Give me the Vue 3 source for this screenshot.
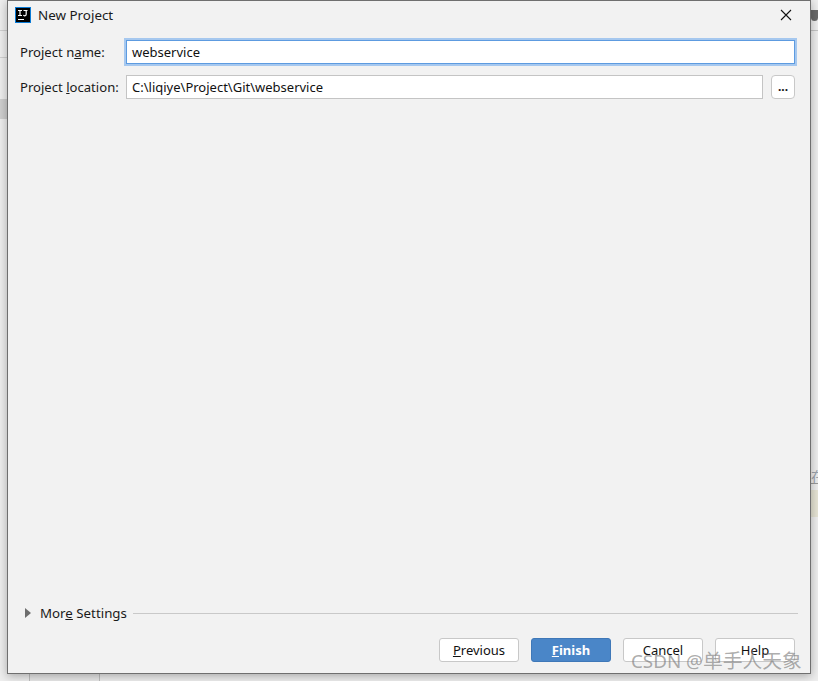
<script setup>
const ok = true
</script>

<template>
  <div class="desk">
    <div class="ruleLeft a"></div>
    <div class="ruleLeft b"></div>
    <div class="bandLeft"></div>
    <div class="bottomTab"></div>
    <div class="rightIcon"></div>
    <div class="rightLine one"></div>
    <div class="rightGlyph">在</div>
    <div class="rightLine two"></div>
    <div class="rightNote"></div>
    <section class="dialog">
      <header class="title">
        <svg class="logo" width="16" height="16" viewBox="0 0 16 16">
          <rect x="0" y="0" width="16" height="16" fill="#0a7bd6" />
          <rect x="1" y="1" width="14" height="14" fill="#000" />
          <rect x="3" y="12" width="6" height="1" fill="#fff" />
          <path d="M3 3.5h4M5 3.5v5M3 8.5h4M8.5 3.5h4M11.2 3.5v3.6a1.5 1.5 0 0 1-2.8.9" fill="none" stroke="#fff" stroke-width="1.2" />
        </svg>
        <span class="titleText">New Project</span>
        <svg class="close" width="12" height="12" viewBox="0 0 12 12">
          <path d="M1 1l10 10M11 1L1 11" stroke="#111" stroke-width="1.1" fill="none" />
        </svg>
      </header>

      <div class="form">
        <div class="row">
          <label class="label">Project n<u>a</u>me:</label>
          <div class="input focus">webservice</div>
        </div>
        <div class="row">
          <label class="label">Project <u>l</u>ocation:</label>
          <div class="input">C:\liqiye\Project\Git\webservice</div>
          <button class="dots">...</button>
        </div>
      </div>

      <div class="more">
        <svg class="tri" width="6" height="10" viewBox="0 0 6 10"><path d="M0 0l6 5-6 5z" fill="#6e6e6e" /></svg>
        <span class="moreText">Mor<u>e</u> Settings</span>
        <span class="moreLine"></span>
      </div>

      <footer class="foot">
        <button class="btn"><u>P</u>revious</button>
        <button class="btn primary"><u>F</u>inish</button>
        <button class="btn">Cancel</button>
        <button class="btn">Help</button>
      </footer>
    </section>
    <div class="mark"><span class="latin">CSDN @</span>单手人天象</div>
  </div>
</template>

<style>
html, body { margin: 0; padding: 0; background: #e9e9e9; overflow: hidden; }
</style>

<style scoped>
.desk { position: relative; width: 818px; height: 681px; background: #eeeeee; overflow: hidden; font-family: "Noto Sans", "Open Sans", sans-serif; }
.ruleLeft { position: absolute; left: 0; width: 7px; height: 1px; background: #d0d0d0; }
.ruleLeft.a { top: 30px; }
.ruleLeft.b { top: 57px; }
.bandLeft { position: absolute; left: 0; top: 99px; width: 7px; height: 20px; background: #cfcfcf; }
.bottomTab { position: absolute; left: 29px; top: 673px; width: 71px; height: 8px; border-left: 1px solid #c0c0c0; border-right: 1px solid #c0c0c0; box-sizing: border-box; background: #e8e8e8; }
.rightIcon { position: absolute; left: 811px; top: 10px; width: 7px; height: 11px; background: #6a6a6a; border-radius: 0 0 4px 4px; }
.rightLine { position: absolute; left: 811px; width: 7px; height: 1px; background: #c4c4c4; }
.rightLine.one { top: 30px; }
.rightLine.two { top: 483px; background: #9a9a9a; }
.rightGlyph { position: absolute; left: 811px; top: 468px; width: 7px; overflow: hidden; font-size: 14px; line-height: 16px; color: #9aa3ad; font-family: "Noto Sans CJK SC", sans-serif; }
.rightNote { position: absolute; left: 811px; top: 490px; width: 7px; height: 27px; background: #e6e4d4; }

.dialog { position: absolute; left: 7px; top: 0; width: 804px; height: 674px; box-sizing: border-box; background: #f2f2f2; border: 1px solid #6f6f6f; box-shadow: 0 2px 9px rgba(0,0,0,.3); display: flex; flex-direction: column; color: #111; font-size: 13px; }
.title { height: 28px; display: flex; align-items: center; padding: 0 18px 0 7px; flex: none; }
.logo { flex: none; }
.titleText { margin-left: 7px; font-size: 13.4px; color: #1a1a1a; }
.close { margin-left: auto; }
.form { display: flex; flex-direction: column; gap: 11px; padding: 11px 15px 0 12px; flex: none; }
.row { display: flex; align-items: center; height: 24px; }
.label { width: 106px; flex: none; font-size: 13.1px; color: #1a1a1a; white-space: nowrap; }
.input { flex: 1; height: 24px; box-sizing: border-box; background: #fff; border: 1px solid #c4c4c4; padding: 0 5px; font-size: 13px; line-height: 22px; color: #111; }
.input.focus { border-color: #5d9be0; box-shadow: 0 0 0 2px #a6c8ef; }
.dots { flex: none; width: 24px; height: 24px; margin-left: 8px; box-sizing: border-box; border: 1px solid #c8c8c8; border-radius: 4px; background: #fff; font: 700 12px/16px "Noto Sans", sans-serif; padding: 0; color: #111; }
.more { margin-top: auto; display: flex; align-items: center; padding: 0 12px 0 17px; height: 20px; flex: none; }
.tri { flex: none; }
.moreText { margin-left: 9px; font-size: 13.3px; color: #1a1a1a; white-space: nowrap; }
.moreLine { flex: 1; height: 1px; margin-left: 6px; background: #c9c9c9; }
.foot { display: flex; justify-content: flex-end; gap: 12px; padding: 15px 15px 11px 0; flex: none; }
.btn { width: 80px; height: 24px; box-sizing: border-box; border: 1px solid #c8c8c8; border-radius: 3px; background: #fff; font: 13px/20px "Noto Sans", sans-serif; color: #111; padding: 0; }
.btn.primary { background: #4a86c8; border-color: #3f78b8; color: #fff; font-weight: 700; }
.mark { position: absolute; left: 631px; top: 649px; font-size: 19.8px; line-height: 24px; color: rgba(120,120,120,.62); font-family: "Noto Sans", "Noto Sans CJK SC", sans-serif; white-space: nowrap; }
.latin { font-size: 18.8px; }
</style>
